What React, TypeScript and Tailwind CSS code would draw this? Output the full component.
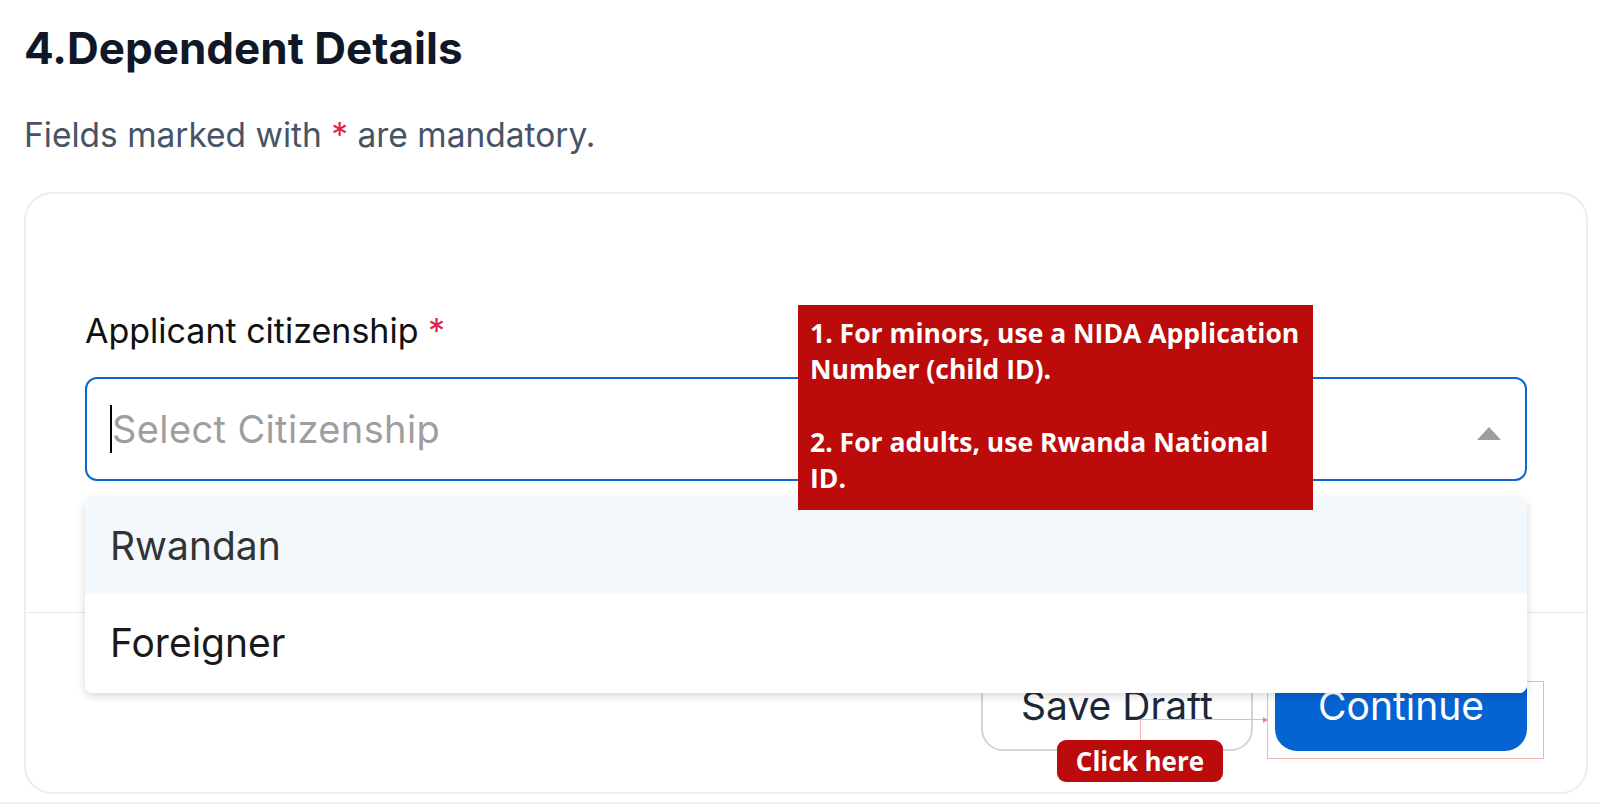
const OPTIONS = [
  { label: 'Rwandan', active: true },
  { label: 'Foreigner', active: false },
];

const sans = { fontFamily: 'Inter, "Noto Sans", sans-serif' };
const hint = { fontFamily: '"Open Sans", "Noto Sans", sans-serif' };

export default function App() {
  return (
    <div className="relative w-[1600px] h-[804px] overflow-hidden bg-white" style={sans}>
      <div className="pl-[24px] pr-[12px] pt-[22px]">
        {/* ── Heading ─────────────────────────────────────── */}
        <h1 className="text-[44px] leading-[53px] font-bold text-[#101828]">
          4.Dependent Details
        </h1>
        <p className="mt-[40px] text-[33.5px] leading-[40px] text-[#475467]">
          Fields marked with <span className="text-[#e0234e]">*</span> are mandatory.
        </p>

        {/* ── Card ────────────────────────────────────────── */}
        <div className="mt-[37px] h-[602px] rounded-[28px] border-2 border-[#ececf2] flex flex-col">
          <div className="relative px-[59px] pt-[116px] pb-[131px]">
            <label className="block text-[34px] leading-[41px] text-[#111111]">
              Applicant citizenship <span className="text-[#e0234e]">*</span>
            </label>

            {/* select input */}
            <div className="mt-[26px] h-[104px] rounded-[12px] border-2 border-[#0b66cf] flex items-center pl-[23px] pr-[24px]">
              <span className="w-[2px] h-[48px] bg-black" />
              <span className="flex-1 text-[38px] text-[#9e9e9e] tracking-[0.01em]">Select Citizenship</span>
              <svg width="24" height="13" viewBox="0 0 24 13" className="mt-[8px]">
                <path d="M0 13 L12 0 L24 13 Z" fill="#9e9e9e" />
              </svg>
            </div>

            {/* dropdown list */}
            <div className="absolute left-[59px] right-[59px] top-[304px] z-10 rounded-[8px] bg-white overflow-hidden shadow-[0_3px_10px_rgba(0,0,0,0.16)]">
              {OPTIONS.map(({ label, active }) => (
                <div
                  key={label}
                  className={
                    active
                      ? 'h-[96px] flex items-center pl-[25px] bg-[#f3f8fd] text-[39px] text-[#333333]'
                      : 'h-[99px] flex items-center pl-[25px] bg-white text-[39px] text-[#1a1a1a]'
                  }
                >
                  {label}
                </div>
              ))}
            </div>

            {/* hint tooltip */}
            <div
              className="absolute left-[772px] top-[111px] z-20 w-[515px] h-[205px] bg-[#bb0b0b] text-white font-bold text-[26.5px] leading-[36.3px] pl-[12px] pt-[10px] whitespace-nowrap"
              style={hint}
            >
              1. For minors, use a NIDA Application
              <br />
              Number (child ID).
              <br />
              <br />
              2. For adults, use Rwanda National
              <br />
              ID.
            </div>
          </div>

          {/* ── Footer actions ────────────────────────────── */}
          <div className="border-t border-[#e5e7eb] flex-1 flex justify-end items-start gap-[22px] px-[59px] pt-[48px]">
            <button className="w-[272px] h-[90px] rounded-[22px] border-2 border-[#d0d5dd] bg-white text-[39px] text-[#1d2939]">
              Save Draft
            </button>
            <button className="w-[252px] h-[90px] rounded-[22px] bg-[#0564d2] text-[39px] text-white">
              Continue
            </button>
          </div>
        </div>
        <div className="mt-[8px] h-[4px] -ml-[24px] -mr-[12px] bg-[#f2f2f5]" />
      </div>

      {/* ── Annotation overlay ──────────────────────────── */}
      <div className="absolute left-[1267px] top-[681px] w-[277px] h-[78px] border border-[#f3b4b4]" />
      <div className="absolute left-[1140px] top-[719px] w-[127px] h-[21px] border-l border-t border-[#f3b4b4]" />
      <div className="absolute left-[1263px] top-[717px] w-0 h-0 border-y-[3px] border-y-transparent border-l-[5px] border-l-[#e58a8a]" />
      <div
        className="absolute left-[1057px] top-[740px] w-[166px] h-[42px] rounded-[9px] bg-[#bb0b0b] text-white font-bold text-[26px] leading-[42px] text-center"
        style={hint}
      >
        Click here
      </div>
    </div>
  );
}
